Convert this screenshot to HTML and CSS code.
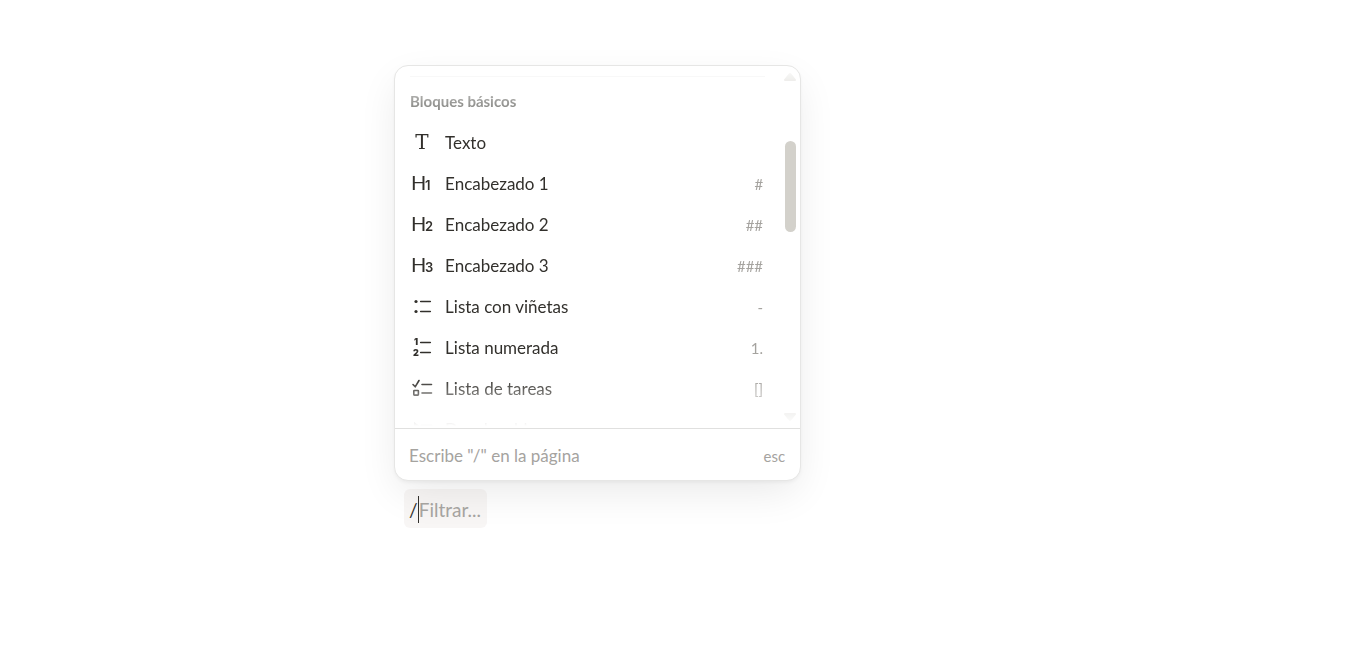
FILE: index.html
```html
<!DOCTYPE html>
<html lang="es">
<head>
  <meta charset="UTF-8" />
  <meta name="viewport" content="width=device-width, initial-scale=1.0"/>
  <title>Bloques</title>
  <link rel="stylesheet" href="styles.css">
</head>
<body>
  <main class="page">
    <div class="menu">
      <div class="scroll-area">
        <div class="list">
          <h2 class="title">Bloques básicos</h2>
          <button class="item">
            <svg class="icon" viewBox="0 0 24 24"><text class="serif" x="12" y="18">T</text></svg>
            <span class="name">Texto</span>
          </button>
          <button class="item">
            <svg class="icon" viewBox="0 0 24 24"><text class="big" x="1" y="18">H</text><text class="small" x="15" y="18">1</text></svg>
            <span class="name">Encabezado 1</span>
            <span class="key">#</span>
          </button>
          <button class="item">
            <svg class="icon" viewBox="0 0 24 24"><text class="big" x="1" y="18">H</text><text class="small" x="15" y="18">2</text></svg>
            <span class="name">Encabezado 2</span>
            <span class="key">##</span>
          </button>
          <button class="item">
            <svg class="icon" viewBox="0 0 24 24"><text class="big" x="1" y="18">H</text><text class="small" x="15" y="18">3</text></svg>
            <span class="name">Encabezado 3</span>
            <span class="key">###</span>
          </button>
          <button class="item">
            <svg class="icon" viewBox="0 0 24 24">
              <circle cx="6" cy="6.5" r="1.6"/><circle cx="6" cy="16.5" r="1.6"/>
              <path d="M10.7 6.5h9.6M10.7 16.5h9.6"/>
            </svg>
            <span class="name">Lista con viñetas</span>
            <span class="key">-</span>
          </button>
          <button class="item">
            <svg class="icon" viewBox="0 0 24 24">
              <text class="tiny" x="6" y="9">1</text><text class="tiny" x="6" y="20">2</text>
              <path d="M10.7 6.5h9.6M10.7 16.5h9.6"/>
            </svg>
            <span class="name">Lista numerada</span>
            <span class="key">1.</span>
          </button>
          <button class="item">
            <svg class="icon" viewBox="0 0 24 24">
              <path d="M3 7.5l2.2 2.3L9 3.5M12 7.5h9.5M12 16h9.5"/>
              <rect x="3.8" y="13.5" width="4.6" height="4.6" rx="0.5"/>
            </svg>
            <span class="name">Lista de tareas</span>
            <span class="key">[]</span>
          </button>
          <button class="item">
            <svg class="icon" viewBox="0 0 24 24">
              <path class="solid" d="M4 4l5 3.5l-5 3.5z"/>
              <path d="M11.5 7.5h10M11.5 16.5h10"/>
            </svg>
            <span class="name">Desplegable</span>
          </button>
        </div>
        <div class="scrollbar">
          <svg class="arrow" viewBox="0 0 14 10"><path d="M7 2L12 8H2z"/></svg>
          <div class="thumb"></div>
          <svg class="arrow" viewBox="0 0 14 10"><path d="M2 2h10L7 8z"/></svg>
        </div>
      </div>
      <div class="footer">
        <span class="hint">Escribe "/" en la página</span>
        <span class="esc">esc</span>
      </div>
    </div>
    <label class="filter">
      <span class="slash">/</span>
      <input type="text" placeholder="Filtrar..." aria-label="Filtrar">
    </label>
  </main>
</body>
</html>
```

FILE: styles.css
```css
* {
  margin: 0;
  padding: 0;
  box-sizing: border-box;
  font-family: Lato, 'Liberation Sans', sans-serif;
}

body {
  background: #fff;
  color: #32302c;
}

.page {
  width: 31%;
  min-width: 407px;
  margin-left: 29.3%;
  padding-top: 65px;
}

.menu {
  max-width: 407px;
  background: #fff;
  border: 1px solid #e6e6e5;
  border-radius: 14px;
  box-shadow: 0 14px 40px -4px rgba(0, 0, 0, 0.09), 0 2px 4px -1px rgba(0, 0, 0, 0.06);
  overflow: hidden;
}

.scroll-area {
  display: flex;
  height: 362px;
  overflow: hidden;
  -webkit-mask-image: linear-gradient(transparent, #000 40px, #000 312px, transparent 360px);
  mask-image: linear-gradient(transparent, #000 40px, #000 312px, transparent 360px);
}

.list {
  flex: 1;
  margin: 10px 0 0 15px;
  border-top: 1px solid #e6e6e5;
}

.title {
  height: 45px;
  padding-top: 14px;
  font-size: 15px;
  line-height: 20px;
  font-weight: bold;
  color: #91918e;
}

.item {
  display: flex;
  align-items: center;
  width: 100%;
  height: 41px;
  padding-right: 2px;
  border: none;
  background: none;
  color: #32302c;
  text-align: left;
}

.icon {
  width: 24px;
  height: 24px;
  margin-right: 11px;
  overflow: visible;
  fill: none;
  stroke: #32302c;
  stroke-width: 1.6;
  stroke-linecap: round;
  stroke-linejoin: round;
}

.icon text {
  fill: #32302c;
  stroke: none;
}

.icon circle,
.icon .solid {
  fill: #32302c;
  stroke: none;
}

.icon .serif {
  font-family: 'DejaVu Serif', serif;
  font-size: 20px;
  text-anchor: middle;
}

.icon .big {
  font-size: 20px;
}

.icon .small {
  font-family: Inter, sans-serif;
  font-size: 13px;
  font-weight: 600;
}

.icon .tiny {
  font-family: Inter, sans-serif;
  font-size: 9px;
  font-weight: 900;
  text-anchor: middle;
}

.name {
  flex: 1;
  font-size: 17px;
  line-height: 24px;
}

.key {
  font-size: 15px;
  line-height: 20px;
  color: #a5a39f;
}

.scrollbar {
  display: flex;
  flex-direction: column;
  align-items: center;
  width: 14px;
  margin: 6px 3px 6px 18px;
}

.arrow {
  width: 14px;
  height: 10px;
  fill: #d3d1cb;
  stroke: #d3d1cb;
  stroke-width: 2;
  stroke-linejoin: round;
}

.thumb {
  width: 11px;
  height: 91px;
  margin: 59px 0 auto;
  border-radius: 6px;
  background: #d3d1cb;
}

.footer {
  display: flex;
  align-items: center;
  justify-content: space-between;
  height: 52px;
  padding: 2px 15px 0 14px;
  border-top: 1px solid #e0e0df;
  color: #a5a39f;
}

.hint {
  font-size: 17px;
}

.esc {
  font-size: 15px;
}

.filter {
  display: inline-flex;
  align-items: center;
  height: 39px;
  margin: 8px 0 0 10px;
  padding: 1px 4px 0 5px;
  border-radius: 6px;
  background: rgba(66, 35, 3, 0.04);
  font-size: 19px;
}

.slash {
  border-right: 1px solid #32302c;
  line-height: 27px;
}

.filter input {
  width: 64px;
  border: none;
  outline: none;
  background: none;
  font-size: 19px;
}

.filter input::placeholder {
  color: #a5a39f;
  opacity: 1;
}
```
